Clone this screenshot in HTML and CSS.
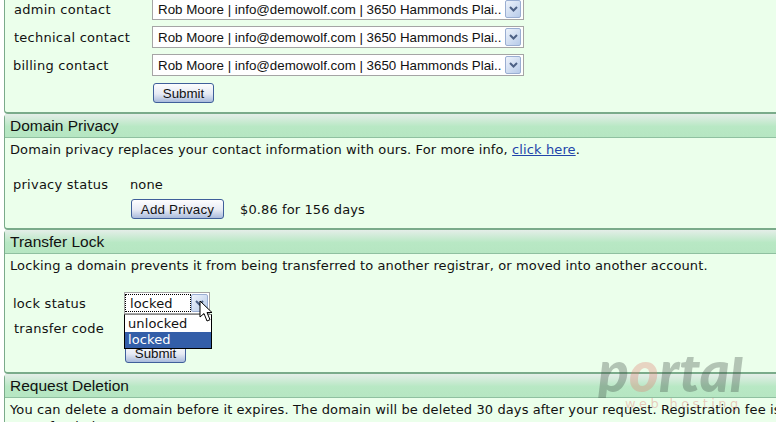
FILE: index.html
```html
<!DOCTYPE html>
<html lang="en">
<head>
  <meta charset="UTF-8" />
  <title>Domain settings</title>
  <link rel="stylesheet" href="styles.css">
</head>
<body>
  <div class="page">

    <div class="panel contacts">
      <div class="row">
        <span class="label">admin contact</span>
        <div class="select wide"><span class="value">Rob Moore | info@demowolf.com | 3650 Hammonds Plai..</span><span class="arrow"><svg width="9" height="6" viewBox="0 0 9 6"><path d="M1 1l3.500 3.500L8 1" fill="none" stroke="#4d6185" stroke-width="2"/></svg></span></div>
      </div>
      <div class="row">
        <span class="label">technical contact</span>
        <div class="select wide"><span class="value">Rob Moore | info@demowolf.com | 3650 Hammonds Plai..</span><span class="arrow"><svg width="9" height="6" viewBox="0 0 9 6"><path d="M1 1l3.500 3.500L8 1" fill="none" stroke="#4d6185" stroke-width="2"/></svg></span></div>
      </div>
      <div class="row">
        <span class="label billing">billing contact</span>
        <div class="select wide"><span class="value">Rob Moore | info@demowolf.com | 3650 Hammonds Plai..</span><span class="arrow"><svg width="9" height="6" viewBox="0 0 9 6"><path d="M1 1l3.500 3.500L8 1" fill="none" stroke="#4d6185" stroke-width="2"/></svg></span></div>
      </div>
      <div class="submit-row"><button class="btn">Submit</button></div>
    </div>

    <div class="panel">
      <h3>Domain Privacy</h3>
      <p class="intro">Domain privacy replaces your contact information with ours. For more info, <a href="#">click here</a>.</p>
      <div class="privacy">
        <span class="label">privacy status</span>
        <span>none</span>
        <span></span>
        <div class="price"><button class="btn add">Add Privacy</button><span>$0.86 for 156 days</span></div>
      </div>
    </div>

    <div class="panel lock">
      <h3>Transfer Lock</h3>
      <p class="intro">Locking a domain prevents it from being transferred to another registrar, or moved into another account.</p>
      <div class="lock-form">
        <span class="label">lock status</span>
        <div class="dropdown">
          <div class="select small"><span class="value focused">locked</span><span class="arrow"><svg width="9" height="6" viewBox="0 0 9 6"><path d="M1 1l3.500 3.500L8 1" fill="none" stroke="#4d6185" stroke-width="2"/></svg></span></div>
          <ul class="menu">
            <li>unlocked</li>
            <li class="active">locked</li>
          </ul>
          <svg class="cursor" width="14" height="23" viewBox="0 0 14 23"><path d="M1 1v16l4-3.500 3 7.500 3-1.300-3-7.200h5z" fill="#fff" stroke="#000" stroke-width="1"/></svg>
        </div>
        <span class="label code">transfer code</span>
        <span></span>
      </div>
      <div class="lock-submit"><button class="btn">Submit</button></div>
    </div>

    <div class="panel">
      <h3>Request Deletion</h3>
      <p class="intro">You can delete a domain before it expires. The domain will be deleted 30 days after your request. Registration fee is<br>not refunded.</p>
    </div>

  </div>

  <div class="logo">
    <div class="logo-name">p<span class="logo-o">o</span>rtal</div>
    <div class="logo-sub">web hosting</div>
  </div>
</body>
</html>
```

FILE: styles.css
```css
html, body {
  margin: 0;
  height: 422px;
  overflow: hidden;
  background: #fff;
}
body {
  position: relative;
  font-family: "DejaVu Sans", Verdana, sans-serif;
  font-size: 13px;
  letter-spacing: 0.11px;
  color: #111;
}
.page {
  width: 1000px;
  margin-top: -5px;
  padding-left: 4px;
}
.panel {
  background: #ebffeb;
  border-left: 1px solid #7aab8a;
  border-bottom: 2px solid #7aab8a;
  border-radius: 4px 0 0 4px;
}
.contacts {
  height: 119px;
  box-sizing: border-box;
}
h3 {
  margin: 0;
  height: 23px;
  padding-left: 5px;
  font: normal 15.5px/24px "Liberation Sans", Arial, sans-serif;
  letter-spacing: 0;
  color: #111;
  background: linear-gradient(#e4eee8, #b8e8c4 55%, #b6e6c2);
  border-bottom: 1px solid #8fc0a0;
}
.intro {
  margin: 0;
  padding: 3px 0 0 5px;
  line-height: 17px;
  white-space: nowrap;
}
a {
  color: #2244aa;
}
.row {
  display: flex;
  align-items: center;
  height: 28px;
}
.label {
  padding-left: 8px;
  letter-spacing: 0.25px;
}
.row .label {
  width: 138px;
  padding-left: 9px;
}
.row .billing {
  padding-left: 8px;
  width: 139px;
}
.select {
  display: flex;
  box-sizing: border-box;
  height: 22px;
  border: 1px solid #a5a5a5;
  background: #fff;
  font: 13.33px "Liberation Sans", Arial, sans-serif;
  letter-spacing: 0;
}
.wide {
  width: 372px;
}
.small {
  width: 86px;
  font: 13px "DejaVu Sans", Verdana, sans-serif;
  letter-spacing: 0.11px;
}
.value {
  flex: 1;
  padding-left: 5px;
  line-height: 21px;
  white-space: nowrap;
  overflow: hidden;
}
.focused {
  margin: 1px 0 1px 0;
  padding-left: 4px;
  line-height: 18px;
  border: 1px dotted #000;
}
.arrow {
  display: flex;
  align-items: center;
  justify-content: center;
  box-sizing: border-box;
  width: 16px;
  margin: 1px 2px 1px 1px;
  border: 1px solid #9aaed2;
  border-radius: 2px;
  background: linear-gradient(135deg, #eef3fb, #b7cbe9);
}
.small .arrow {
  width: 17px;
  margin-left: 0;
  margin-right: 1px;
}
.btn {
  box-sizing: border-box;
  width: 61px;
  height: 20px;
  padding: 1px 0 0;
  font: 13.33px/16px "Liberation Sans", Arial, sans-serif;
  letter-spacing: 0;
  color: #111;
  border: 1px solid #3f5f9a;
  border-radius: 3px;
  background: linear-gradient(#fdfdfe, #e6eaf4 55%, #a9bbdc);
}
.submit-row {
  padding: 4px 0 0 148px;
}
.privacy {
  display: grid;
  grid-template-columns: 125px auto;
  grid-template-rows: 20px 20px;
  row-gap: 5px;
  align-items: center;
  box-sizing: border-box;
  height: 70px;
  padding-top: 16px;
}
.price {
  display: flex;
  align-items: center;
  gap: 16px;
}
.add {
  width: 93px;
  margin-left: 1px;
  letter-spacing: 0.2px;
}
.lock-form {
  display: grid;
  grid-template-columns: 119px auto;
  grid-template-rows: 22px 20px;
  row-gap: 4px;
  align-items: center;
  padding-top: 18px;
}
.lock-form .code {
  padding-left: 9px;
}
.dropdown {
  position: relative;
  width: 86px;
}
.menu {
  position: absolute;
  top: 22px;
  left: 0;
  z-index: 2;
  box-sizing: border-box;
  width: 88px;
  margin: 0;
  padding: 1px 0 0;
  list-style: none;
  background: #fff;
  border: 1px solid #000;
  border-top-color: #888;
  font-size: 13px;
  line-height: 16px;
}
.menu li {
  padding-left: 3px;
}
.menu .active {
  background: #335ea8;
  color: #fff;
}
.cursor {
  position: absolute;
  top: 8px;
  left: 75px;
  z-index: 3;
}
.lock-submit {
  box-sizing: border-box;
  height: 34px;
  padding: 5px 0 0 120px;
}
.logo {
  position: absolute;
  left: 598px;
  top: 357px;
  width: 150px;
  pointer-events: none;
}
.logo-name {
  height: 41px;
  overflow: hidden;
  font: italic 900 57px/26px "Lato", sans-serif;
  letter-spacing: 0;
  color: rgba(60, 70, 65, 0.32);
}
.logo-o {
  color: rgba(225, 120, 110, 0.32);
}
.logo-sub {
  margin: -2px 0 0 27px;
  font: 13px "DejaVu Sans", sans-serif;
  letter-spacing: 3.4px;
  color: rgba(225, 120, 110, 0.38);
  white-space: nowrap;
}
```
